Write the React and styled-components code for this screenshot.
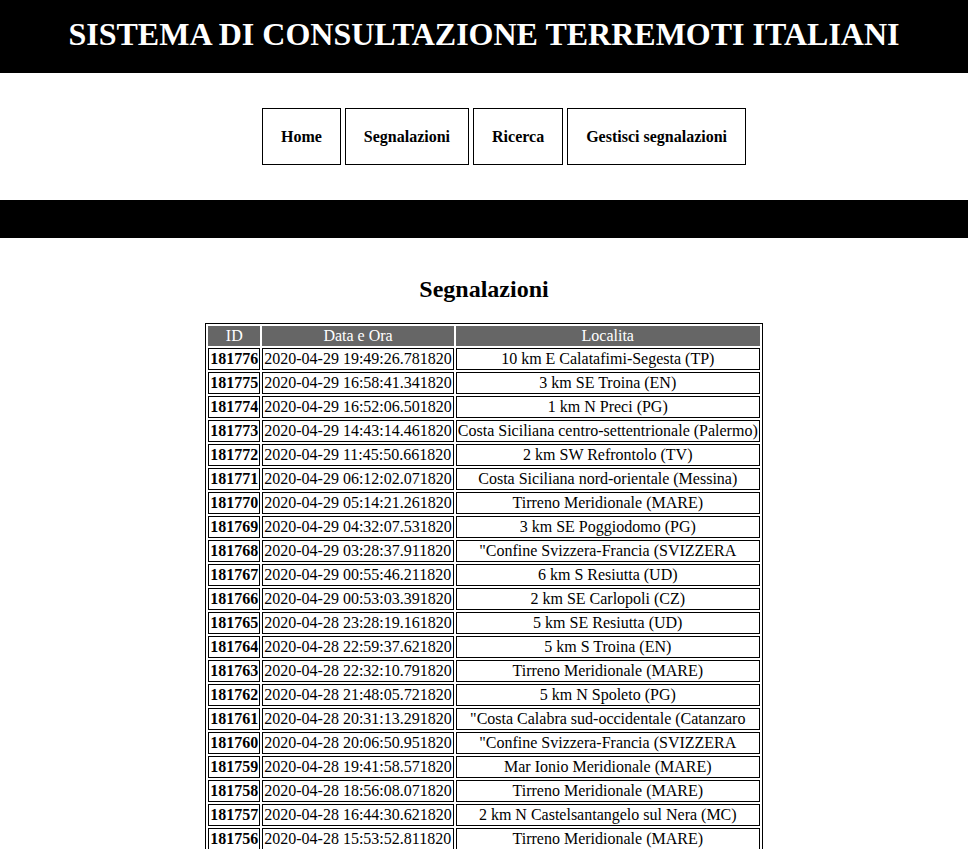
import React from 'react';
import styled, { createGlobalStyle } from 'styled-components';

const GlobalStyle = createGlobalStyle`
  body {
    margin: 0;
    background: #fff;
    color: #000;
    font-family: "Liberation Serif", "Times New Roman", serif;
    font-size: 16px;
  }
`;

const Header = styled.header`
  background: #000;
  padding: 16px 0 20px;
  text-align: center;
`;

const Title = styled.h1`
  margin: 0;
  color: #fff;
  font-size: 32px;
  font-weight: bold;
`;

const Nav = styled.nav`
  display: flex;
  justify-content: center;
  gap: 4px;
  padding: 35px 0 35px 40px;
`;

const NavButton = styled.a`
  display: flex;
  align-items: center;
  height: 55px;
  padding: 0 18px;
  border: 1px solid #000;
  color: #000;
  font-weight: bold;
  text-decoration: none;
  cursor: pointer;
`;

const Band = styled.div`
  background: #000;
  height: 38px;
`;

const Main = styled.main`
  padding-top: 38px;
`;

const Heading = styled.h2`
  margin: 0 0 20px;
  text-align: center;
  font-size: 24px;
`;

const Table = styled.table`
  margin: 0 auto;
  border: 1px solid #000;
  border-spacing: 2px;
`;

const HeadCell = styled.th`
  background: #666;
  color: #fff;
  font-weight: normal;
  border: none;
  padding: 1px;
`;

const Cell = styled.td`
  border: 1px solid #000;
  padding: 1px;
  white-space: nowrap;
  text-align: ${p => (p.$center ? 'center' : 'left')};
  font-weight: ${p => (p.$bold ? 'bold' : 'normal')};
`;

const rows = [
  [181776, '2020-04-29 19:49:26.781820', '10 km E Calatafimi-Segesta (TP)'],
  [181775, '2020-04-29 16:58:41.341820', '3 km SE Troina (EN)'],
  [181774, '2020-04-29 16:52:06.501820', '1 km N Preci (PG)'],
  [181773, '2020-04-29 14:43:14.461820', 'Costa Siciliana centro-settentrionale (Palermo)'],
  [181772, '2020-04-29 11:45:50.661820', '2 km SW Refrontolo (TV)'],
  [181771, '2020-04-29 06:12:02.071820', 'Costa Siciliana nord-orientale (Messina)'],
  [181770, '2020-04-29 05:14:21.261820', 'Tirreno Meridionale (MARE)'],
  [181769, '2020-04-29 04:32:07.531820', '3 km SE Poggiodomo (PG)'],
  [181768, '2020-04-29 03:28:37.911820', '"Confine Svizzera-Francia (SVIZZERA'],
  [181767, '2020-04-29 00:55:46.211820', '6 km S Resiutta (UD)'],
  [181766, '2020-04-29 00:53:03.391820', '2 km SE Carlopoli (CZ)'],
  [181765, '2020-04-28 23:28:19.161820', '5 km SE Resiutta (UD)'],
  [181764, '2020-04-28 22:59:37.621820', '5 km S Troina (EN)'],
  [181763, '2020-04-28 22:32:10.791820', 'Tirreno Meridionale (MARE)'],
  [181762, '2020-04-28 21:48:05.721820', '5 km N Spoleto (PG)'],
  [181761, '2020-04-28 20:31:13.291820', '"Costa Calabra sud-occidentale (Catanzaro'],
  [181760, '2020-04-28 20:06:50.951820', '"Confine Svizzera-Francia (SVIZZERA'],
  [181759, '2020-04-28 19:41:58.571820', 'Mar Ionio Meridionale (MARE)'],
  [181758, '2020-04-28 18:56:08.071820', 'Tirreno Meridionale (MARE)'],
  [181757, '2020-04-28 16:44:30.621820', '2 km N Castelsantangelo sul Nera (MC)'],
  [181756, '2020-04-28 15:53:52.811820', 'Tirreno Meridionale (MARE)'],
];

const links = ['Home', 'Segnalazioni', 'Ricerca', 'Gestisci segnalazioni'];

export default function App() {
  return (
    <>
      <GlobalStyle />
      <Header>
        <Title>SISTEMA DI CONSULTAZIONE TERREMOTI ITALIANI</Title>
      </Header>
      <Nav>
        {links.map(l => <NavButton key={l}>{l}</NavButton>)}
      </Nav>
      <Band />
      <Main>
        <Heading>Segnalazioni</Heading>
        <Table>
          <thead>
            <tr>
              <HeadCell>ID</HeadCell>
              <HeadCell>Data e Ora</HeadCell>
              <HeadCell>Localita</HeadCell>
            </tr>
          </thead>
          <tbody>
            {rows.map(([id, date, place]) => (
              <tr key={id}>
                <Cell $bold>{id}</Cell>
                <Cell>{date}</Cell>
                <Cell $center>{place}</Cell>
              </tr>
            ))}
          </tbody>
        </Table>
      </Main>
    </>
  );
}
